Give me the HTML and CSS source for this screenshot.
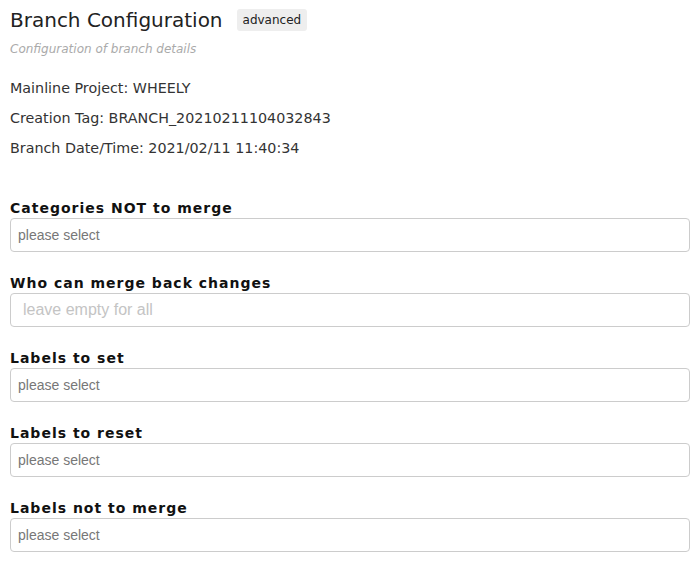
FILE: index.html
```html
<!DOCTYPE html>
<html lang="en">
<head>
    <meta charset="UTF-8">
    <title>Branch Configuration</title>
    <link rel="stylesheet" href="styles.css">
</head>
<body>

    <div class="header">
        <h2>Branch Configuration</h2>
        <span class="badge">advanced</span>
    </div>
    <p class="subtitle">Configuration of branch details</p>

    <div class="info">
        <p>Mainline Project: WHEELY</p>
        <p>Creation Tag: BRANCH_20210211104032843</p>
        <p>Branch Date/Time: 2021/02/11 11:40:34</p>
    </div>

    <div class="fields">
        <div class="field">
            <label>Categories NOT to merge</label>
            <div class="select">please select</div>
        </div>
        <div class="field">
            <label>Who can merge back changes</label>
            <input type="text" class="text-input" placeholder="leave empty for all">
        </div>
        <div class="field">
            <label>Labels to set</label>
            <div class="select">please select</div>
        </div>
        <div class="field">
            <label>Labels to reset</label>
            <div class="select">please select</div>
        </div>
        <div class="field">
            <label>Labels not to merge</label>
            <div class="select">please select</div>
        </div>
    </div>

</body>
</html>
```

FILE: styles.css
```css
body {
    font-family: "DejaVu Sans", Verdana, sans-serif;
    margin: 0;
    padding: 6px 8px 0 10px;
    color: #333;
    background: #fff;
}
.header {
    display: flex;
    align-items: center;
    gap: 14px;
}
h2 {
    font-size: 20px;
    font-weight: normal;
    margin: 0;
    line-height: 28px;
    color: #222;
}
.badge {
    background-color: #eee;
    border-radius: 3px;
    font-size: 12px;
    padding: 4px 6px;
    color: #222;
}
.subtitle {
    font-style: italic;
    color: #aaa;
    font-size: 12px;
    margin: 8px 0 0 0;
}
.info {
    margin-top: 17px;
}
.info p {
    font-size: 14.3px;
    margin: 0;
    line-height: 30px;
}
.fields {
    margin-top: 37px;
    display: flex;
    flex-direction: column;
    gap: 23px;
}
.field label {
    display: block;
    font-weight: bold;
    font-size: 14px;
    letter-spacing: 1px;
    color: #111;
    line-height: 16px;
    margin-bottom: 2px;
}
.select, .text-input {
    box-sizing: border-box;
    width: 100%;
    height: 34px;
    border: 1px solid #ccc;
    border-radius: 4px;
    font-family: "Liberation Sans", Arial, sans-serif;
    font-size: 14px;
    line-height: 32px;
    padding: 0 7px;
    color: #777;
}
.text-input {
    display: block;
    padding: 0 12px;
    outline: none;
}
.text-input::placeholder {
    color: #c4c4c4;
    font-size: 16px;
}
```
